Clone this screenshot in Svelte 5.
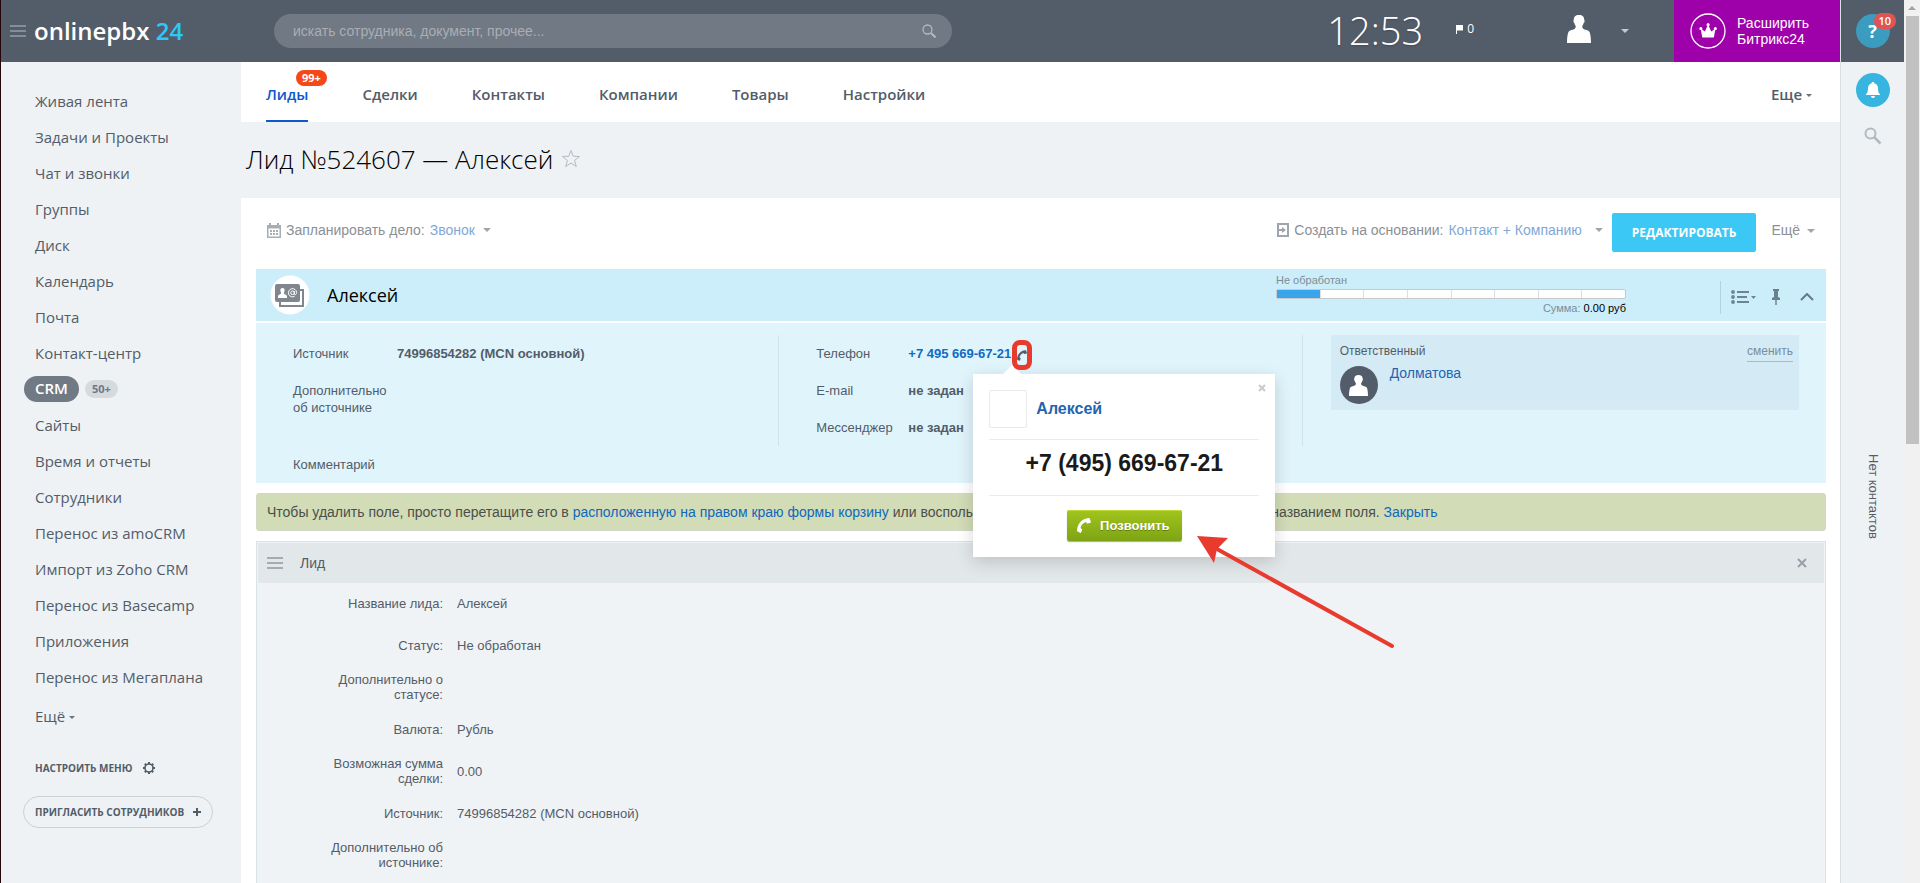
<script lang="ts">
  type MenuItem = { label: string; active?: boolean; counter?: string };
  type Field = { label: string; value: string };

  const menu: MenuItem[] = [
    { label: 'Живая лента' },
    { label: 'Задачи и Проекты' },
    { label: 'Чат и звонки' },
    { label: 'Группы' },
    { label: 'Диск' },
    { label: 'Календарь' },
    { label: 'Почта' },
    { label: 'Контакт-центр' },
    { label: 'CRM', active: true, counter: '50+' },
    { label: 'Сайты' },
    { label: 'Время и отчеты' },
    { label: 'Сотрудники' },
    { label: 'Перенос из amoCRM' },
    { label: 'Импорт из Zoho CRM' },
    { label: 'Перенос из Basecamp' },
    { label: 'Приложения' },
    { label: 'Перенос из Мегаплана' }
  ];

  const tabs: MenuItem[] = [
    { label: 'Лиды', active: true, counter: '99+' },
    { label: 'Сделки' },
    { label: 'Контакты' },
    { label: 'Компании' },
    { label: 'Товары' },
    { label: 'Настройки' }
  ];

  const fields: Field[] = [
    { label: 'Название лида:', value: 'Алексей' },
    { label: 'Статус:', value: 'Не обработан' },
    { label: 'Дополнительно о статусе:', value: '' },
    { label: 'Валюта:', value: 'Рубль' },
    { label: 'Возможная сумма сделки:', value: '0.00' },
    { label: 'Источник:', value: '74996854282 (MCN основной)' },
    { label: 'Дополнительно об источнике:', value: '' }
  ];

  // Lead pipeline: how many stages there are and how many are already passed.
  const stages = 8;
  const stage = 1;
</script>

{#snippet person()}
  <svg class="person" viewBox="0 0 24 35" preserveAspectRatio="none" aria-hidden="true">
    <path
      fill="#fff"
      d="M12 0c3.600 0 5.200 2.400 5.200 5.600 0 1 .5 1.200.4 2.400-.1 1-.8 1.300-1 2.300-.3 1.700-1.100 2.600-1.300 3.600-.1 1.500.2 2.600.9 3.300 1.400 1.300 4.900 1.800 6 3.300C23.400 22.300 24 29 24 35H0c0-6 .6-12.700 1.800-14.500 1.100-1.500 4.600-2 6-3.300.7-.7 1-1.800.9-3.300-.2-1-1-1.900-1.300-3.600-.2-1-.9-1.300-1-2.300-.1-1.200.4-1.400.4-2.400C6.800 2.400 8.400 0 12 0z"
    />
  </svg>
{/snippet}

{#snippet handset()}
  <svg class="handset" viewBox="0 0 14 15" aria-hidden="true">
    <path
      fill="currentColor"
      d="M13.900 3.700 12.800.7C12.600.2 12.200 0 11.600.1 5 .8.700 5.300 0 12.400c0 .5.100.9.500 1.200l2.600 1.200c.5.200 1 0 1.200-.5l.8-2.300c.1-.4 0-.7-.3-1L3.500 9.900C4.300 7 6 5 8.700 3.900l1.200 1.300c.3.300.6.4 1 .3l2.400-.7c.5-.2.800-.6.6-1.100z"
    />
  </svg>
{/snippet}

<div class="app">
  <div class="page">
    <header class="top">
      <div class="brand">
        <button class="burger" aria-label="Меню"><span></span><span></span><span></span></button>
        <a class="logo" href="/">onlinepbx <b>24</b></a>
      </div>

      <form class="search">
        <input type="text" aria-label="Поиск" placeholder="искать сотрудника, документ, прочее..." />
        <svg width="14" height="14" viewBox="0 0 14 14" aria-hidden="true">
          <circle cx="5.500" cy="5.500" r="4.500" fill="none" stroke="#b4b9c0" stroke-width="1.300" />
          <path d="M9 9l4.500 4.500" stroke="#b4b9c0" stroke-width="2" />
        </svg>
      </form>

      <div class="status">
        <time class="clock">12:53</time>
        <span class="flag">
          <svg width="7" height="9" viewBox="0 0 7 9" aria-hidden="true">
            <path fill="#fff" d="M0 0h7v5.500H1V9H0z" />
          </svg>0
        </span>
        <button class="user" aria-label="Профиль">
          {@render person()}
          <span class="caret light"></span>
        </button>
        <a class="upgrade" href="/upgrade">
          <svg width="36" height="36" viewBox="0 0 36 36" aria-hidden="true">
            <circle cx="18" cy="18" r="17" fill="none" stroke="#fff" stroke-width="1.300" />
            <path
              fill="#fff"
              d="M12.300 24.500 10.900 17a1.500 1.500 0 1 1 1.100-.5l2.900 2 2.500-5.400a1.600 1.600 0 1 1 1.400 0l2.400 5.400 3-2a1.500 1.500 0 1 1 1.100.5l-1.500 7.500z"
            />
          </svg>
          <span>Расширить Битрикс24</span>
        </a>
      </div>
    </header>

    <div class="body">
      <nav class="sidebar" aria-label="Главное меню">
        <ul>
          {#each menu as item}
            <li>
              <a href="/" class:active={item.active}>{item.label}</a>
              {#if item.counter}<span class="counter">{item.counter}</span>{/if}
            </li>
          {/each}
        </ul>
        <button class="more">Ещё <span class="caret small"></span></button>
        <button class="setup">
          Настроить меню
          <svg width="14" height="14" viewBox="0 0 14 14" aria-hidden="true">
            <circle cx="7" cy="7" r="4" fill="none" stroke="currentColor" stroke-width="1.600" />
            <path
              d="M7 1v2M7 11v2M1 7h2M11 7h2M2.800 2.800l1.400 1.400M9.800 9.800l1.400 1.400M11.200 2.800 9.800 4.200M4.200 9.800l-1.400 1.400"
              stroke="currentColor"
              stroke-width="2"
            />
          </svg>
        </button>
        <button class="invite">
          Пригласить сотрудников
          <svg width="8" height="8" viewBox="0 0 8 8" aria-hidden="true">
            <path fill="currentColor" d="M3 0h2v3h3v2H5v3H3V5H0V3h3z" />
          </svg>
        </button>
      </nav>

      <main>
        <nav class="tabs" aria-label="CRM">
          {#each tabs as tab}
            <a href="/" class:active={tab.active}>
              {tab.label}
              {#if tab.counter}<span class="badge">{tab.counter}</span>{/if}
            </a>
          {/each}
          <button>Еще <span class="caret small"></span></button>
        </nav>

        <div class="title">
          <h1>Лид №524607 — Алексей</h1>
          <button aria-label="В избранное">
            <svg width="20" height="19" viewBox="0 0 20 19" aria-hidden="true">
              <path
                fill="none"
                stroke="#b5bac0"
                d="M10 1.500l2.200 5.700 6.300.3-4.900 3.900 1.700 6.100L10 14.100l-5.300 3.400 1.700-6.100-4.900-3.900 6.300-.3z"
              />
            </svg>
          </button>
        </div>

        <div class="content">
          <div class="toolbar">
            <svg width="14" height="15" viewBox="0 0 14 15" aria-hidden="true">
              <path
                fill="#a8adb4"
                fill-rule="evenodd"
                d="M0 2h2V0h2v2h6V0h2v2h2v13H0zm1.500 3.500v8h11v-8zM3 7h2v2H3zm3 0h2v2H6zm3 0h2v2H9zM3 10h2v2H3zm3 0h2v2H6zm3 0h2v2H9z"
              />
            </svg>
            <span>Запланировать дело:</span>
            <a href="/">Звонок</a>
            <span class="caret"></span>

            <svg class="right" width="12" height="14" viewBox="0 0 12 14" aria-hidden="true">
              <rect x="1" y="1" width="10" height="12" fill="none" stroke="#9fa5ad" stroke-width="2" />
              <path fill="#9fa5ad" d="M0 6h5V4l4 3-4 3V8H0z" />
            </svg>
            <span>Создать на основании:</span>
            <a href="/">Контакт + Компанию</a>
            <span class="caret far"></span>
            <button class="edit">Редактировать</button>
            <button class="extra">Ещё <span class="caret"></span></button>
          </div>

          <section class="summary">
            <div class="summary-head">
              <svg class="card-icon" width="40" height="40" viewBox="0 0 40 40" aria-hidden="true">
                <circle cx="20" cy="20" r="19.500" fill="#fff" />
                <path d="M10 27v4h23V15h-4" fill="none" stroke="#80868e" stroke-width="2" />
                <rect x="5" y="9" width="25" height="18" rx="2" fill="#80868e" />
                <path
                  fill="#fff"
                  d="M12.500 13c1.500 0 2.300 1 2.100 2.600-.1 1.300-.6 1.800-.7 2.600 0 1.200 3.100 1 3.100 3.300V23H8v-1.500c0-2.300 3.100-2.100 3.100-3.300-.1-.8-.6-1.300-.7-2.600-.2-1.600.6-2.600 2.100-2.600z"
                />
                <circle cx="22.500" cy="17.800" r="1.800" fill="none" stroke="#fff" />
                <path
                  d="M24.300 16v2.800c0 1.500 2.300 1 2.300-1.300a4.100 4.100 0 1 0-2 3.800"
                  fill="none"
                  stroke="#fff"
                />
              </svg>
              <h2>Алексей</h2>
              <div class="progress">
                <span>Не обработан</span>
                <div class="stages">
                  {#each { length: stages } as _, i}
                    <i class:done={i < stage}></i>
                  {/each}
                </div>
                <span class="sum">Сумма: <b>0.00 руб</b></span>
              </div>
              <div class="head-tools">
                <button aria-label="Вид списка">
                  <svg width="26" height="14" viewBox="0 0 26 14" aria-hidden="true">
                    <path fill="#6b8593" d="M6 1h12v2H6zm0 5h10v2H6zm0 5h12v2H6zm14-5h5l-2.500 3z" />
                    <circle cx="2" cy="2" r="1.900" fill="#6b8593" />
                    <circle cx="2" cy="7" r="1.900" fill="#6b8593" />
                    <circle cx="2" cy="12" r="1.900" fill="#6b8593" />
                  </svg>
                </button>
                <button aria-label="Закрепить">
                  <svg width="8" height="16" viewBox="0 0 8 16" aria-hidden="true">
                    <path fill="#6b7f8c" d="M1 0h6v2H6v6l2 1v2H4.700v5H3.300v-5H0V9l2-1V2H1z" />
                  </svg>
                </button>
                <button aria-label="Свернуть">
                  <svg width="14" height="8" viewBox="0 0 14 8" aria-hidden="true">
                    <path d="M1 7l6-6 6 6" fill="none" stroke="#667a86" stroke-width="2" />
                  </svg>
                </button>
              </div>
            </div>

            <div class="summary-body">
              <div class="columns">
                <dl>
                  <dt>Источник</dt>
                  <dd>74996854282 (MCN основной)</dd>
                  <dt>Дополнительно об источнике</dt>
                  <dd></dd>
                </dl>
                <dl class="contacts">
                  <dt>Телефон</dt>
                  <dd>
                    <a href="tel:+74956696721">+7 495 669-67-21</a>
                    <div class="call">
                      <button class="call-icon" aria-label="Позвонить">{@render handset()}</button>
                      <div class="popup" role="dialog" aria-label="Звонок">
                        <button class="popup-close" aria-label="Закрыть">
                          <svg width="8" height="8" viewBox="0 0 8 8" aria-hidden="true">
                            <path d="M1 1l6 6M7 1L1 7" stroke="#c8cacc" stroke-width="2" />
                          </svg>
                        </button>
                        <div class="popup-name">
                          <span class="photo"></span>
                          <a href="/">Алексей</a>
                        </div>
                        <p class="number">+7 (495) 669-67-21</p>
                        <button class="dial">{@render handset()} Позвонить</button>
                        <svg class="pointer" width="200" height="114" viewBox="0 0 200 114" aria-hidden="true">
                          <path d="M20 13l175 97" stroke="#e83b2e" stroke-width="4" stroke-linecap="round" />
                          <path d="M0 0l31 2-11 11-3 14z" fill="#e83b2e" />
                        </svg>
                      </div>
                    </div>
                  </dd>
                  <dt>E-mail</dt>
                  <dd>не задан</dd>
                  <dt>Мессенджер</dt>
                  <dd>не задан</dd>
                </dl>
                <div class="owner-column">
                  <div class="owner">
                    <div class="owner-head">
                      <span>Ответственный</span>
                      <button>сменить</button>
                    </div>
                    <div class="owner-name">
                      <span class="avatar">{@render person()}</span>
                      <a href="/">Долматова</a>
                    </div>
                  </div>
                </div>
              </div>
              <p class="comment">Комментарий</p>
            </div>
          </section>

          <p class="hint">
            Чтобы удалить поле, просто перетащите его в
            <a href="/">расположенную на правом краю формы корзину</a>
            или воспользуйтесь командой «удалить» в меню рядом с названием поля.
            <a href="/">Закрыть</a>
          </p>

          <section class="lead">
            <div class="lead-head">
              <button class="burger" aria-label="Переместить"><span></span><span></span><span></span></button>
              <h3>Лид</h3>
              <button class="close" aria-label="Удалить секцию">
                <svg width="10" height="10" viewBox="0 0 10 10" aria-hidden="true">
                  <path d="M1 1l8 8M9 1L1 9" stroke="#9a9fa8" stroke-width="2" />
                </svg>
              </button>
            </div>
            <table>
              <tbody>
                {#each fields as field}
                  <tr>
                    <th scope="row">{field.label}</th>
                    <td>{field.value}</td>
                  </tr>
                {/each}
              </tbody>
            </table>
          </section>
        </div>
      </main>
    </div>
  </div>

  <aside class="rail">
    <div class="rail-top">
      <button class="round help" aria-label="Помощь">?<span class="help-count">10</span></button>
    </div>
    <button class="round bell" aria-label="Уведомления">
      <svg width="14" height="16" viewBox="0 0 14 16" aria-hidden="true">
        <path
          fill="#fff"
          d="M7 0c.9 0 1.300.5 1.400 1.200C10.600 1.800 11.900 3.600 12 6c.1 4 .6 4.900 2 6.300V13H0v-.7C1.400 10.900 1.900 10 2 6c.1-2.400 1.400-4.200 3.600-4.800C5.700.5 6.100 0 7 0zM4.900 14h4.200c-.2 1.300-1 2-2.100 2s-1.900-.7-2.100-2z"
        />
      </svg>
    </button>
    <button class="find" aria-label="Поиск контактов">
      <svg width="18" height="18" viewBox="0 0 18 18" aria-hidden="true">
        <circle cx="6.500" cy="6.500" r="5" fill="none" stroke="#b3b9c0" stroke-width="2" />
        <path d="M10 10l6.500 6.500" stroke="#b3b9c0" stroke-width="2.500" />
      </svg>
    </button>
    <span class="no-contacts">Нет контактов</span>
  </aside>

  <div class="scrollbar" aria-hidden="true">
    <svg width="8" height="4" viewBox="0 0 8 4"><path fill="#a3a3a3" d="M4 0l4 4H0z" /></svg>
    <div class="thumb"></div>
  </div>
</div>

<style>
  :global(body) {
    background: #eef2f4;
  }

  .app {
    display: flex;
    height: 100vh;
    overflow: hidden;
    box-sizing: border-box;
    border-left: 1px solid #24060b;
    background: #eef2f4;
    color: #535c69;
    font: 13px/16px 'Liberation Sans', Arial, sans-serif;
  }

  .app :global(*) {
    box-sizing: border-box;
  }

  button {
    padding: 0;
    border: 0;
    background: none;
    color: inherit;
    font: inherit;
    cursor: pointer;
  }

  a {
    color: inherit;
    text-decoration: none;
  }

  svg {
    flex: none;
    display: block;
  }

  h1,
  h2,
  h3,
  p,
  dl,
  dd,
  ul {
    margin: 0;
    padding: 0;
    font-weight: 400;
  }

  .page {
    flex: 1;
    min-width: 0;
    display: flex;
    flex-direction: column;
  }

  .caret {
    flex: none;
    display: inline-block;
    border: 4px solid transparent;
    border-top-color: #a1a6ad;
    border-bottom: 0;
  }

  .caret.small {
    border-width: 3px;
    border-bottom: 0;
    border-top-color: #6a727c;
    vertical-align: middle;
  }

  .caret.light {
    border-top-color: #c5c9ce;
  }

  /* top bar */
  .top {
    display: flex;
    align-items: center;
    height: 62px;
    background: #535c69;
    color: #fff;
  }

  .brand {
    flex: 0 0 273px;
    display: flex;
    align-items: center;
    gap: 8px;
    padding-left: 9px;
  }

  .burger {
    display: flex;
    flex-direction: column;
    gap: 3px;
    width: 16px;
  }

  .burger span {
    height: 2px;
    background: #868d96;
  }

  .logo {
    font: 600 24px/32px 'Open Sans', sans-serif;
  }

  .logo b {
    color: #2fc7f7;
    font-weight: 600;
  }

  .search {
    flex: 0 1 678px;
    display: flex;
    align-items: center;
    height: 34px;
    padding: 0 16px 0 19px;
    border-radius: 17px;
    background: #717984;
  }

  .search input {
    flex: 1;
    min-width: 0;
    padding: 0;
    border: 0;
    outline: 0;
    background: none;
    color: #fff;
    font: 14px/20px 'Liberation Sans', Arial, sans-serif;
  }

  .search input::placeholder {
    color: #a9aeb5;
  }

  .status {
    display: flex;
    align-items: center;
    margin-left: auto;
  }

  .clock {
    padding-bottom: 2px;
    font: 300 38px/58px 'Open Sans', sans-serif;
    text-shadow: 0 1px 2px rgba(0, 0, 0, 0.2);
  }

  .flag {
    display: flex;
    align-items: center;
    gap: 4px;
    margin: 0 93px 4px 33px;
    font: 12px/16px 'Open Sans', sans-serif;
  }

  .user {
    display: flex;
    align-items: center;
    gap: 30px;
    margin-right: 45px;
  }

  .user .person {
    width: 24px;
    height: 28px;
    margin-bottom: 4px;
  }

  .upgrade {
    display: flex;
    align-items: center;
    gap: 11px;
    width: 166px;
    height: 62px;
    padding-left: 16px;
    background: #9e00a9;
    font-size: 14px;
  }

  .upgrade span {
    width: 80px;
  }

  .body {
    flex: 1;
    display: flex;
    min-height: 0;
  }

  /* left menu */
  .sidebar {
    flex: 0 0 240px;
    display: flex;
    flex-direction: column;
    align-items: flex-start;
    padding: 21px 0 0 22px;
    font: 15px/24px 'Open Sans', sans-serif;
  }

  .sidebar ul {
    list-style: none;
  }

  .sidebar li {
    display: flex;
    align-items: center;
    height: 36px;
  }

  .sidebar li a {
    padding: 0 12px;
    border-radius: 13px;
  }

  .sidebar li a.active {
    margin-left: 1px;
    padding: 0 11px 2px;
    background: #717984;
    color: #fff;
    font-weight: 600;
  }

  .counter {
    margin-left: 6px;
    padding: 0 7px;
    border-radius: 9px;
    background: #d5dadd;
    color: #6f7884;
    font-size: 11px;
    font-weight: 700;
    line-height: 18px;
  }

  .more {
    margin: 9px 0 0 12px;
  }

  .setup {
    display: flex;
    align-items: center;
    gap: 10px;
    margin: 28px 0 0 12px;
    font-size: 10px;
    font-weight: 700;
    text-transform: uppercase;
  }

  .invite {
    display: flex;
    align-items: center;
    gap: 9px;
    height: 32px;
    margin-top: 16px;
    padding: 0 11px;
    border: 1px solid #ccd1d5;
    border-radius: 16px;
    font-size: 10px;
    font-weight: 700;
    text-transform: uppercase;
  }

  main {
    flex: 1;
    min-width: 0;
    display: flex;
    flex-direction: column;
  }

  .tabs {
    flex: none;
    display: flex;
    gap: 54px;
    height: 60px;
    padding: 0 28px 0 25px;
    background: #fff;
    font: 600 15px/64px 'Open Sans', sans-serif;
  }

  .tabs a {
    position: relative;
    height: 60px;
  }

  .tabs a.active {
    border-bottom: 2px solid #0f58d0;
    color: #0f58d0;
  }

  .badge {
    position: absolute;
    top: 8px;
    left: 30px;
    padding: 0 6px;
    border-radius: 8px;
    background: #f54819;
    color: #fff;
    font-size: 11px;
    font-weight: 700;
    line-height: 16px;
  }

  .tabs button {
    margin-left: auto;
  }

  .title {
    flex: none;
    display: flex;
    align-items: center;
    gap: 8px;
    height: 76px;
    padding: 0 0 3px 5px;
  }

  h1 {
    color: #000;
    font: 300 26px/36px 'Open Sans', sans-serif;
  }

  .content {
    flex: 1 0 auto;
    padding: 0 14px 0 15px;
    background: #fff;
  }

  .toolbar {
    display: flex;
    align-items: center;
    gap: 5px;
    height: 71px;
    padding: 0 11px 7px;
    color: #8b9096;
    font-size: 14px;
  }

  .toolbar a {
    color: #7fa8d6;
  }

  .toolbar .caret {
    margin-left: 3px;
  }

  .toolbar .right {
    margin-left: auto;
  }

  .toolbar .caret.far {
    margin-left: 8px;
  }

  .edit {
    height: 39px;
    margin: 4px 10px 0 4px;
    padding: 0 20px;
    border-radius: 2px;
    background: #3bc8f5;
    color: #fff;
    font: 700 12px/39px 'Open Sans', sans-serif;
    text-transform: uppercase;
  }

  .extra .caret {
    margin-bottom: 2px;
  }

  /* lead summary */
  .summary-head {
    display: flex;
    align-items: center;
    height: 52px;
    padding: 0 12px 0 14px;
    background: #cceefb;
  }

  h2 {
    margin-left: 17px;
    color: #000;
    font: 18px/24px 'Open Sans', sans-serif;
  }

  .progress {
    width: 350px;
    margin-left: auto;
    display: flex;
    flex-direction: column;
    gap: 2px;
    padding-bottom: 2px;
    color: #7c8c96;
    font-size: 11px;
    line-height: 14px;
  }

  .stages {
    display: flex;
    height: 10px;
    border: 1px solid #c6cacd;
    border-radius: 2px;
    background: #fff;
  }

  .stages i {
    flex: 1;
    border-right: 1px solid #dcdfe1;
  }

  .stages i:last-child {
    border: 0;
  }

  .stages i.done {
    background: #3aa5ec;
  }

  .sum {
    text-align: right;
  }

  .sum b {
    color: #000;
    font-weight: 400;
  }

  .head-tools {
    display: flex;
    align-items: center;
    height: 33px;
    margin: 4px 0 0 94px;
    padding-left: 10px;
    border-left: 1px solid #b0d3e1;
  }

  .head-tools button + button {
    margin-left: 15px;
  }

  .head-tools button:last-child {
    margin-left: 20px;
  }

  .summary-body {
    margin-top: 2px;
    padding: 12px 0 10px;
    background: #e0f4fc;
  }

  .columns {
    display: grid;
    grid-template-columns: repeat(3, 1fr);
    min-height: 111px;
  }

  dl {
    display: grid;
    grid-template-columns: 104px 1fr;
    align-content: start;
    row-gap: 20px;
    padding: 10px 0 0 37px;
    border-right: 1px solid #cfe4ec;
    line-height: 17px;
  }

  dl.contacts {
    grid-template-columns: 92px 1fr;
  }

  dd {
    display: flex;
    font-weight: 700;
  }

  dd a {
    color: #0f6bc4;
  }

  .call {
    position: relative;
    color: #535c69;
    font-weight: 400;
  }

  .call-icon {
    position: absolute;
    top: -5px;
    left: 1px;
    display: flex;
    align-items: center;
    justify-content: center;
    width: 20px;
    height: 30px;
    border: 5px solid #e83b2e;
    border-radius: 8px;
    z-index: 3;
  }

  .call-icon .handset {
    width: 10px;
    height: 11px;
  }

  .popup {
    position: absolute;
    z-index: 2;
    top: 29px;
    left: -38px;
    width: 302px;
    padding: 16px;
    background: #fff;
    box-shadow: 0 5px 16px rgba(0, 0, 0, 0.16);
  }

  .popup::before {
    content: '';
    position: absolute;
    top: -9px;
    left: 30px;
    border: 9px solid transparent;
    border-top: 0;
    border-bottom-color: #fff;
  }

  .popup-close {
    position: absolute;
    top: 10px;
    right: 9px;
  }

  .popup-name {
    display: flex;
    align-items: center;
    gap: 9px;
    padding-bottom: 11px;
    border-bottom: 1px solid #eaebec;
  }

  .photo {
    width: 38px;
    height: 38px;
    border: 1px solid #e8e9ea;
    border-radius: 2px;
  }

  .popup-name a {
    color: #1f65b0;
    font-size: 16px;
    font-weight: 700;
    line-height: 20px;
  }

  .number {
    padding: 10px 0 19px;
    border-bottom: 1px solid #eaebec;
    color: #1a1a1a;
    font-size: 23px;
    font-weight: 700;
    line-height: 26px;
    text-align: center;
  }

  .dial {
    display: flex;
    align-items: center;
    gap: 9px;
    height: 31px;
    margin: 14px auto 0;
    padding: 0 12px 0 10px;
    border-radius: 2px;
    background: linear-gradient(180deg, #a2c41d 0%, #7da414 100%);
    box-shadow: inset 0 1px 0 #bddc3a, 0 1px 1px rgba(0, 0, 0, 0.35);
    color: #fff;
    font-weight: 700;
    text-shadow: 0 1px 0 rgba(0, 0, 0, 0.3);
  }

  .dial .handset {
    width: 14px;
    height: 15px;
  }

  .pointer {
    position: absolute;
    top: 162px;
    left: 224px;
    pointer-events: none;
  }

  .owner-column {
    padding: 0 27px 0 28px;
  }

  .owner {
    height: 75px;
    padding: 8px 6px 0 9px;
    background: #d4ebf6;
    font-size: 12px;
  }

  .owner-head {
    display: flex;
    align-items: flex-start;
    justify-content: space-between;
    height: 23px;
  }

  .owner-head button {
    padding-bottom: 2px;
    border-bottom: 1px solid #a9bbc6;
    color: #7c8c99;
  }

  .owner-name {
    display: flex;
    gap: 12px;
  }

  .avatar {
    display: flex;
    align-items: center;
    justify-content: center;
    width: 38px;
    height: 38px;
    border-radius: 50%;
    background: #535c69;
  }

  .avatar .person {
    width: 19px;
    height: 21px;
  }

  .owner-name a {
    color: #1f65b0;
    font-size: 14px;
    line-height: 14px;
  }

  .comment {
    margin-top: 10px;
    padding-left: 37px;
    line-height: 17px;
  }

  .hint {
    height: 38px;
    margin-top: 10px;
    padding: 0 10px;
    border: 1px solid #d2d7c8;
    border-radius: 3px;
    background: #d2dcb7;
    color: #4b4f4a;
    font-size: 14px;
    line-height: 36px;
    white-space: nowrap;
    overflow: hidden;
  }

  .hint a {
    color: #0f68bd;
  }

  .lead {
    margin-top: 10px;
    padding: 1px 1px 24px;
    border: 1px solid #dae4e8;
    background: #eff3f5;
  }

  .lead-head {
    display: flex;
    align-items: center;
    height: 40px;
    padding: 0 17px 0 9px;
    background: #e2e7ea;
  }

  .lead-head .burger span {
    background: #a7abb1;
  }

  h3 {
    margin-left: 17px;
    font-size: 14px;
  }

  .close {
    margin-left: auto;
  }

  table {
    border-collapse: collapse;
    line-height: 15px;
  }

  tr {
    height: 42px;
  }

  th {
    width: 185px;
    padding: 0 0 2px 55px;
    font-weight: 400;
    text-align: right;
  }

  td {
    padding: 0 14px 2px;
  }

  /* messenger rail */
  .rail {
    flex: 0 0 64px;
    display: flex;
    flex-direction: column;
    align-items: center;
    border-left: 1px solid #d9e0e4;
  }

  .rail-top {
    display: flex;
    align-items: center;
    justify-content: center;
    width: 100%;
    height: 62px;
    background: #535c69;
  }

  .round {
    position: relative;
    display: flex;
    align-items: center;
    justify-content: center;
    width: 34px;
    height: 34px;
    border-radius: 50%;
    color: #fff;
  }

  .help {
    background: #3b9cbf;
    font: 700 18px/24px 'Open Sans', sans-serif;
  }

  .help-count {
    position: absolute;
    top: -1px;
    left: 18px;
    padding: 0 5px;
    border-radius: 8px;
    background: #e05553;
    font-size: 11px;
    font-weight: 600;
    line-height: 16px;
  }

  .bell {
    margin-top: 11px;
    background: #35b5df;
  }

  .find {
    margin-top: 20px;
  }

  .no-contacts {
    margin-top: 309px;
    writing-mode: vertical-rl;
  }

  .scrollbar {
    flex: 0 0 16px;
    display: flex;
    flex-direction: column;
    align-items: center;
    background: #f1f1f1;
  }

  .scrollbar svg {
    margin: 6px 0;
  }

  .thumb {
    width: 13px;
    height: 428px;
    background: #c1c1c1;
  }
</style>
